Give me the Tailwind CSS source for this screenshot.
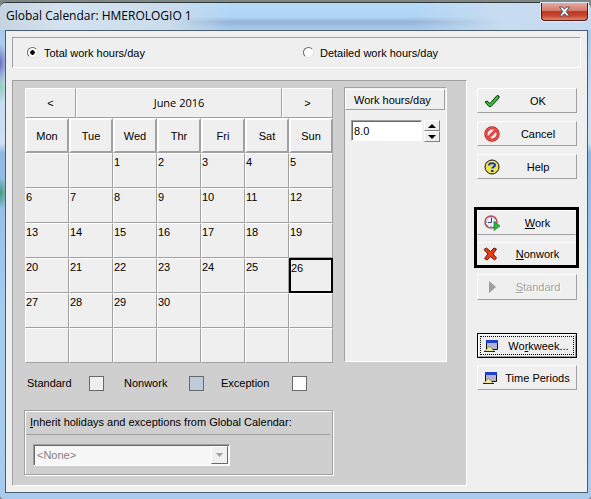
<!DOCTYPE html>
<html lang="en">
<head>
    <meta charset="UTF-8">
    <meta name="viewport" content="width=device-width, initial-scale=1.0">
    <title>Global Calendar: HMEROLOGIO 1</title>
    <script src="https://cdn.jsdelivr.net/npm/@tailwindcss/browser@4"></script>
</head>
<body class="min-h-screen flex flex-col bg-[#7f8784] pt-0.5 text-[11px] leading-4 text-black font-['Liberation_Sans',Arial,sans-serif]">

    <!-- Window frame -->
    <div class="flex-1 flex flex-col rounded-t-md rounded-b-sm border-t border-[#30383c] pl-[5px] pr-[3px] pb-1.5 bg-[radial-gradient(ellipse_8px_20px_at_0_60px,#6a6cc0_0%,#6a6cc000_100%),radial-gradient(ellipse_8px_16px_at_0_84px,#8fcdb4_0%,#8fcdb400_100%),radial-gradient(ellipse_8px_16px_at_0_190px,#3f9a78_0%,#3f9a7800_100%),linear-gradient(180deg,#b5daf8_0px,#b0d4f4_14px,#92b4d6_19px,#a5c8ea_25px,#c4dcf2_90px,#cfe0f2_140px,#8fb8e4_150px,#a5cbef_300px,#a8cbee_100%)]">
        <header class="-ml-[5px] -mr-[3px] h-[27px] flex items-start justify-between pl-1.5 rounded-t-md bg-[linear-gradient(90deg,#c6d4e2_0px,#d4e2f0_60px,#cadcec_170px,#b4d8f700_230px,#b4d8f700_70%,#c8dcf0_85%,#c5daf0_100%)]">
            <h1 class="pt-[3px] text-[12px] leading-5 font-['Open_Sans',Tahoma,sans-serif]">Global Calendar: HMEROLOGIO 1</h1>
            <button aria-label="Close" class="w-[47px] h-[18px] mr-[3px] flex items-center justify-center rounded-b-[4px] border border-t-0 border-[#4d1c1a] bg-[linear-gradient(180deg,#e5aba0_0%,#d4796b_45%,#bf3a25_50%,#c9452f_75%,#e2866d_100%)] shadow-[0_0_0_1px_#dbe9f6]">
                <svg width="13" height="11" viewBox="0 0 13 11">
                    <path d="M1.500 1h3l2 2.200 2-2.200h3L8.300 5.500 11.500 10h-3l-2-2.300-2 2.300h-3L4.700 5.500z" fill="#f4f4f4" stroke="#4c535f" stroke-width="1"/>
                </svg>
            </button>
        </header>

        <!-- Client area -->
        <main class="flex-1 flex flex-col border border-[#4b5c6d] bg-[#efefef] p-1.5">
            <div role="radiogroup" aria-label="Hours mode" class="h-[31px] grid grid-cols-[276px_1fr] items-center border border-[#a0a0a0] border-r-white border-b-white pl-3.5">
                <label class="flex items-center gap-1.5">
                    <input type="radio" name="mode" checked class="appearance-none size-[11px] rounded-full bg-white border border-[#696969] border-r-[#e3e3e3] border-b-[#e3e3e3] checked:bg-[radial-gradient(circle,#000_0_2px,#fff_2.5px)]">
                    Total work hours/day
                </label>
                <label class="flex items-center gap-1.5">
                    <input type="radio" name="mode" class="appearance-none size-[11px] rounded-full bg-white border border-[#696969] border-r-[#e3e3e3] border-b-[#e3e3e3] checked:bg-[radial-gradient(circle,#000_0_2px,#fff_2.5px)]">
                    Detailed work hours/day
                </label>
            </div>

            <div class="flex-1 mt-3 flex gap-2.5 pr-1">
                <section class="flex-1 bg-[#cfcfcf] border border-[#a0a0a0] border-r-white border-b-white pl-[11px] pr-[19px] pt-1.5 pb-2.5">
                    <div class="flex gap-[11px] pl-px">
                        <!-- Calendar -->
                        <div class="flex-1 pt-px">
                            <div class="flex h-[30px]">
                                <button class="w-[51px] bg-[#efefef] border border-white border-r-[#a0a0a0] border-b-[#a0a0a0]">&lt;</button>
                                <div class="flex-1 flex items-center justify-center bg-[#efefef] border border-white border-r-[#a0a0a0] border-b-[#a0a0a0] font-['Open_Sans',Tahoma,sans-serif]">June 2016</div>
                                <button class="w-[51px] bg-[#efefef] border border-white border-r-[#a0a0a0] border-b-[#a0a0a0]">&gt;</button>
                            </div>
                            <table class="w-full table-fixed border-separate border-spacing-0 bg-[#efefef]">
                                <thead>
                                    <tr id="weekdays"></tr>
                                </thead>
                                <tbody id="days"></tbody>
                            </table>
                        </div>

                        <!-- Work hours -->
                        <div class="w-[103px] mb-px bg-[#efefef] border border-[#a0a0a0] border-r-white border-b-white">
                            <label for="hours" class="block h-[21px] mt-px mr-px pl-2 pt-0.5 border border-white border-r-[#a0a0a0] border-b-[#a0a0a0]">Work hours/day</label>
                            <div class="flex gap-0.5 pl-1.5 pt-2.5">
                                <input id="hours" type="text" value="8.0" class="w-[71px] h-[21px] px-0.5 bg-white border border-[#a0a0a0] border-r-white border-b-white shadow-[inset_1px_1px_0_#696969]">
                                <div class="w-4 flex flex-col">
                                    <button aria-label="Increase" class="h-[11px] flex items-center justify-center border border-white border-r-[#808080] border-b-[#808080]">
                                        <svg width="8" height="4" viewBox="0 0 8 4"><path d="M4 0l4 4H0z"/></svg>
                                    </button>
                                    <button aria-label="Decrease" class="h-[11px] flex items-center justify-center border border-white border-r-[#808080] border-b-[#808080]">
                                        <svg width="8" height="4" viewBox="0 0 8 4"><path d="M4 4l4-4H0z"/></svg>
                                    </button>
                                </div>
                            </div>
                        </div>
                    </div>

                    <!-- Legend -->
                    <div class="mt-[13px] pl-[3px] flex items-center leading-[15px]">
                        <span class="w-[62px]">Standard</span>
                        <span class="size-[15px] bg-[#efefef] border border-[#696969]"></span>
                        <span class="w-[65px] ml-5">Nonwork</span>
                        <span class="size-[15px] bg-[#becad8] border border-[#696969]"></span>
                        <span class="w-[71px] ml-[17px]">Exception</span>
                        <span class="size-[15px] bg-white border border-[#696969]"></span>
                    </div>

                    <!-- Inherit -->
                    <div class="mt-[19px] mr-[114px] h-[65px] border border-[#a0a0a0] shadow-[inset_1px_1px_0_#fff,1px_1px_0_#fff] px-px pt-px">
                        <label for="inherit" class="block h-[23px] mr-px pl-1 pt-0.5 border-b border-[#a0a0a0]"><u>I</u>nherit holidays and exceptions from Global Calendar:</label>
                        <div class="relative w-[197px] mt-[9px] ml-[7px]">
                            <select id="inherit" disabled class="appearance-none block w-full h-[22px] pl-[3px] bg-[#f7f7f7] text-[#808080] border border-[#a0a0a0] border-r-white border-b-white shadow-[inset_1px_1px_0_#696969]">
                                <option>&lt;None&gt;</option>
                            </select>
                            <span class="absolute right-0.5 top-0.5 w-[17px] h-[18px] flex items-center justify-center bg-[#efefef] border border-white border-r-[#696969] border-b-[#696969] pointer-events-none">
                                <svg width="7" height="4" viewBox="0 0 7 4"><path d="M0 0h7L3.500 4z" fill="#a0a0a0"/></svg>
                            </span>
                        </div>
                    </div>
                </section>

                <!-- Command buttons -->
                <aside class="w-[100px] pt-2 flex flex-col">
                    <button class="h-[25px] grid grid-cols-[16px_1fr] items-center pl-1.5 pr-1 border border-white border-r-[#a0a0a0] border-b-[#a0a0a0]">
                        <svg width="16" height="14" viewBox="0 0 16 14"><path d="M1 8l2-1 3 2.500 7-8 2 .5v2L7 12.500H5z" fill="#35c435" stroke="#07300a"/></svg>
                        <span class="pl-1">OK</span>
                    </button>
                    <button class="mt-2 h-[25px] grid grid-cols-[16px_1fr] items-center pl-1.5 pr-1 border border-white border-r-[#a0a0a0] border-b-[#a0a0a0]">
                        <svg width="16" height="16" viewBox="0 0 16 16">
                            <circle cx="8" cy="8" r="6.200" fill="#f3e4e3" stroke="#b51d1a" stroke-width="3"/>
                            <path d="M4 12l8-8" stroke="#c92522" stroke-width="2.500"/>
                            <circle cx="8" cy="8" r="6.200" fill="none" stroke="#ee5550" stroke-width="1.500"/>
                            <path d="M4 12l8-8" stroke="#ee5550" stroke-width="1.200"/>
                        </svg>
                        <span class="pl-1">Cancel</span>
                    </button>
                    <button class="mt-2 h-[25px] grid grid-cols-[16px_1fr] items-center pl-1.5 pr-1 border border-white border-r-[#a0a0a0] border-b-[#a0a0a0]">
                        <svg width="16" height="16" viewBox="0 0 16 16">
                            <circle cx="8" cy="8" r="7" fill="#ece64c" stroke="#111"/>
                            <path d="M5 6.500C5 3.500 11 3.500 11 6.200 11 8 8.200 7.800 8.200 9.600M7 12h2.500" fill="none" stroke="#1a35c8" stroke-width="2"/>
                        </svg>
                        <span class="pl-1">Help</span>
                    </button>

                    <div class="mt-7 -ml-[3px] -mr-0.5 border-[3px] border-black flex flex-col gap-[7px]">
                        <button class="h-[25px] grid grid-cols-[16px_1fr] items-center pl-1.5 pr-1 border border-white border-r-[#efefef] border-b-[#a0a0a0]">
                            <svg width="16" height="16" viewBox="0 0 16 16">
                                <circle cx="7" cy="7" r="6" fill="#e3effc" stroke="#b94854" stroke-width="1.500"/>
                                <path d="M7 2v1M7 11v1M2 7h1M11 7h1M10 4l.6-.6M4 10l-.6.6" stroke="#668"/>
                                <path d="M7.500 3v4.500H4" fill="none" stroke="#39486b"/>
                                <path d="M10 6.500l6 4.500-6 4.500z" fill="#2eb53a" stroke="#14801f" stroke-width=".7"/>
                            </svg>
                            <span class="pl-1"><u>W</u>ork</span>
                        </button>
                        <button class="h-[23px] grid grid-cols-[16px_1fr] items-center pl-1.5 pr-1 border-t border-white">
                            <svg width="15" height="14" viewBox="0 0 15 14"><path d="M1 2.500L3.500 1 7.500 4.500 11 1l2.500 1L10 7l3.500 4-2 2L7.500 9.500 4 13l-2.500-1.500L5 7z" fill="#f03c14" stroke="#6e1206"/></svg>
                            <span class="pl-1"><u>N</u>onwork</span>
                        </button>
                    </div>

                    <button disabled class="mt-1.5 h-[26px] grid grid-cols-[16px_1fr] items-center pl-1.5 pr-1 text-[#a0a0a0] border border-white border-r-[#a0a0a0] border-b-[#a0a0a0] [text-shadow:1px_1px_0_#fff]">
                        <svg width="16" height="14" viewBox="0 0 16 14"><path d="M5 1l7 6-7 6z" fill="#9d9d9d"/></svg>
                        <span class="pl-1"><u>S</u>tandard</span>
                    </button>

                    <button class="mt-[33px] h-[25px] p-0.5 border border-black shadow-[inset_1px_1px_0_#fff,inset_-1px_-1px_0_#a0a0a0]">
                        <span class="h-full grid grid-cols-[16px_1fr] items-center pl-[3px] border border-dotted border-black">
                            <svg width="16" height="14" viewBox="0 0 16 14">
                                <path d="M2.500 1.500h11v9h-11z" fill="#b3b3d3" stroke="#111"/>
                                <path d="M2 1h12v3H2z" fill="#1d3fd0"/>
                                <path d="M.5 12.500L5.500 7l5 5.500z" fill="#f0eb9a" stroke="#777342" stroke-width=".7"/>
                                <path d="M0 12.500h11" stroke="#222"/>
                            </svg>
                            <span class="pl-1">Wo<u>r</u>kweek...</span>
                        </span>
                    </button>
                    <button class="mt-[7px] h-[25px] grid grid-cols-[16px_1fr] items-center pl-[5px] border border-white border-r-[#a0a0a0] border-b-[#a0a0a0]">
                        <svg width="16" height="14" viewBox="0 0 16 14">
                            <path d="M2.500 1.500h11v9h-11z" fill="#b3b3d3" stroke="#111"/>
                            <path d="M2 1h12v3H2z" fill="#1d3fd0"/>
                            <path d="M.5 12.500L5.500 7l5 5.500z" fill="#f0eb9a" stroke="#777342" stroke-width=".7"/>
                            <path d="M0 12.500h11" stroke="#222"/>
                        </svg>
                        <span>Time Periods</span>
                    </button>
                </aside>
            </div>
        </main>
    </div>

    <script>
        const names = ["Mon", "Tue", "Wed", "Thr", "Fri", "Sat", "Sun"];
        const firstOffset = 2; // June 1st is a Wednesday
        const daysInMonth = 30;
        const selected = 26;

        document.getElementById("weekdays").innerHTML = names.map(name => `
            <th class="h-[35px] p-0 font-normal text-center border-2 border-t-white border-l-white border-r-[#a0a0a0] border-b-[#a0a0a0]">${name}</th>
        `).join("");

        let rows = "";
        for (let week = 0; week < 6; week++) {
            rows += "<tr>";
            for (let i = 0; i < 7; i++) {
                const day = week * 7 + i - firstOffset + 1;
                const text = day > 0 && day <= daysInMonth ? day : "";
                const border = day === selected
                    ? "border-2 border-black"
                    : "border border-white border-r-[#a0a0a0] border-b-[#a0a0a0]";
                rows += `<td class="h-[35px] p-0 align-top ${border}">${text}</td>`;
            }
            rows += "</tr>";
        }
        document.getElementById("days").innerHTML = rows;
    </script>

</body>
</html>
